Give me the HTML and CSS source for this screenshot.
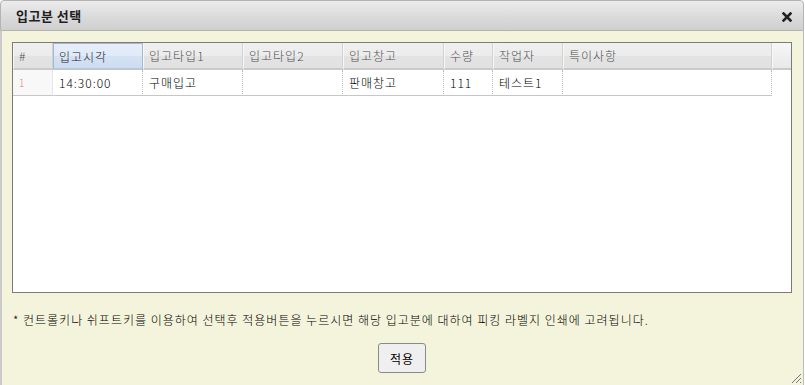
FILE: index.html
```html
<!DOCTYPE html>
<html>
<head>
  <meta charset="UTF-8">
  <link rel="stylesheet" href="styles.css">
  <title>입고분 선택</title>
</head>
<body>
  <div class="dialog">
    <div class="titlebar">
      <span class="title">입고분 선택</span>
      <svg class="close" width="10" height="10" viewBox="0 0 10 10">
        <path d="M1.5 1.5 L8.5 8.5 M8.5 1.5 L1.5 8.5" stroke="#222" stroke-width="2.6" stroke-linecap="square"/>
      </svg>
    </div>
    <div class="content">
      <div class="grid">
        <table class="rows">
          <tr class="head">
            <th class="c-no">#</th>
            <th class="c-time sorted">입고시각</th>
            <th class="c-t1">입고타입1</th>
            <th class="c-t2">입고타입2</th>
            <th class="c-wh">입고창고</th>
            <th class="c-qty">수량</th>
            <th class="c-user">작업자</th>
            <th class="c-note">특이사항</th>
            <th class="c-scroll"></th>
          </tr>
          <tr class="data">
            <td class="rownum">1</td>
            <td>14:30:00</td>
            <td>구매입고</td>
            <td></td>
            <td>판매창고</td>
            <td>111</td>
            <td>테스트1</td>
            <td></td>
            <td class="c-scroll"></td>
          </tr>
        </table>
      </div>
      <p class="notice">* 컨트롤키나 쉬프트키를 이용하여 선택후 적용버튼을 누르시면 해당 입고분에 대하여 피킹 라벨지 인쇄에 고려됩니다.</p>
      <div class="actions">
        <button class="apply">적용</button>
      </div>
      <svg class="grip" width="12" height="12" viewBox="0 0 12 12">
        <path d="M11 2 L2 11 M11 6 L6 11 M11 10 L10 11" stroke="#777" stroke-width="1"/>
      </svg>
    </div>
  </div>
</body>
</html>
```

FILE: styles.css
```css
body {
  margin: 0;
  font-family: "Noto Sans CJK KR", "Noto Sans", sans-serif;
  font-size: 12px;
  background: #fff;
}

.dialog {
  width: 804px;
  height: 385px;
  display: flex;
  flex-direction: column;
  box-sizing: border-box;
}

.titlebar {
  height: 31px;
  box-sizing: border-box;
  display: flex;
  align-items: center;
  justify-content: space-between;
  padding: 0 11px 0 15px;
  border: 1px solid #b4b4b4;
  border-radius: 4px 4px 0 0;
  background: linear-gradient(to bottom, #ececec, #d9d9d9 60%, #cfcfcf);
}

.title {
  font-weight: bold;
  font-size: 13px;
  color: #1e1e1e;
  margin-top: -1px;
  letter-spacing: 0.5px;
}

.close {
  margin-top: 2px;
}

.content {
  flex: 1;
  position: relative;
  background: #f4f3db;
  border-left: 2px solid #cbcbcb;
  border-right: 1px solid #bdbdbd;
  padding: 11px 11px 0 10px;
  display: flex;
  flex-direction: column;
}

.grid {
  height: 251px;
  box-sizing: border-box;
  border: 1px solid #7b7b7b;
  background: #fff;
}

.rows {
  border-collapse: separate;
  border-spacing: 0;
  width: 778px;
  table-layout: fixed;
}

.rows th,
.rows td {
  box-sizing: border-box;
  font-weight: 300;
  letter-spacing: 1px;
  overflow: hidden;
  white-space: nowrap;
}

.head th {
  height: 27px;
  padding: 0 0 0 5px;
  text-align: left;
  color: #505050;
  background: linear-gradient(to bottom, #efefef 0, #ececec 50%, #e3e3e3 51%, #e1e1e1 100%);
  border-right: 1px solid #d2d2d2;
  border-left: 1px solid #f7f7f7;
  border-bottom: 2px solid #cacaca;
}

.head th.sorted {
  color: #222;
  background: linear-gradient(to bottom, #e6eefa 0, #e0eaf8 50%, #d4e2f4 51%, #cddcf0 100%);
  border: 1px solid #a6b8cc;
  border-bottom: 2px solid #b8c8da;
}

.head th.c-scroll {
  background: linear-gradient(to bottom, #f6f6f6, #e8e9eb);
  border-right: none;
  padding: 0;
}

.c-no { width: 40px; }
.c-time { width: 90px; }
.c-t1 { width: 100px; }
.c-t2 { width: 100px; }
.c-wh { width: 101px; }
.c-qty { width: 49px; }
.c-user { width: 70px; }
.c-note { width: 209px; }
.c-scroll { width: 19px; }

.data td {
  height: 26px;
  padding: 0 0 0 6px;
  color: #000;
  border-right: 1px dotted #bdbdbd;
  border-bottom: 1px solid #c6c6c6;
}

.data td.rownum {
  color: #e7856a;
  font-size: 10px;
  background: #f8f8f8;
  border-right: 1px solid #e6e6e6;
}

.data td.c-scroll {
  border: none;
}

.notice {
  margin: 18px 0 0 1px;
  color: #000;
  font-weight: 300;
  line-height: 18px;
  letter-spacing: 1px;
}

.actions {
  display: flex;
  justify-content: center;
  margin-top: 14px;
}

.apply {
  width: 48px;
  height: 30px;
  font-family: "Noto Sans CJK KR", "Noto Sans", sans-serif;
  font-size: 12px;
  letter-spacing: 1px;
  color: #000;
  background: #efefef;
  border: 1px solid #8a8a8a;
  border-radius: 3px;
  padding: 0;
}

.grip {
  position: absolute;
  right: 1px;
  bottom: 1px;
}
```
